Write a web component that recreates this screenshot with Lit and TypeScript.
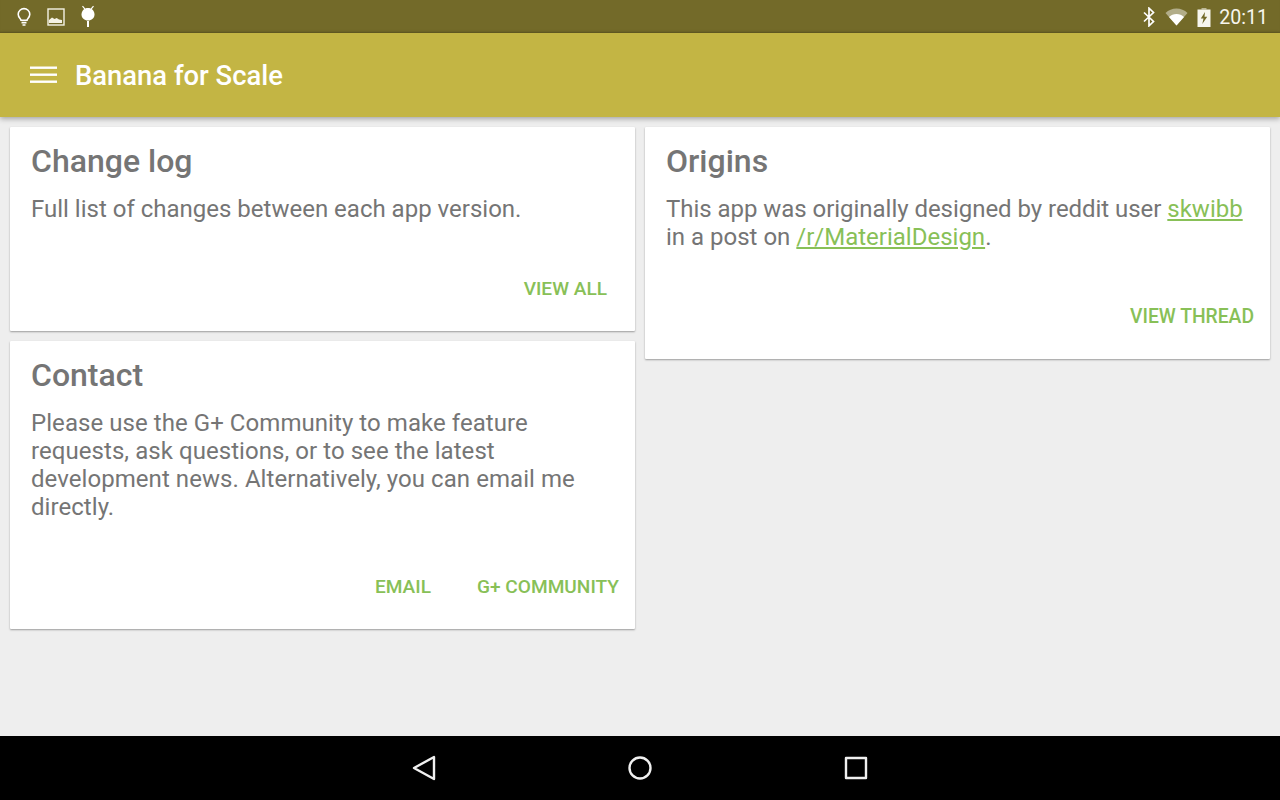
import { LitElement, html, css } from "lit";
import { customElement } from "lit/decorators.js";

@customElement("app-root")
export class AppRoot extends LitElement {
  static styles = css`
    :host { display: block; width: 1280px; height: 800px; font-family: Roboto, "Noto Sans", sans-serif; background: #eeeeee; overflow: hidden; }
    .page { display: flex; flex-direction: column; height: 800px; }
    .status { height: 33px; background: #736a29; display: flex; align-items: center; color: #fff; padding: 0 12px 0 15px; box-sizing: border-box; flex: none; box-shadow: inset 0 -2px 2px -1px rgba(0,0,0,.18); }
    .status svg { display: block; }
    .left { display: flex; align-items: center; gap: 14px; flex: 1; }
    .right { display: flex; align-items: center; gap: 9px; }
    .time { font-size: 19.6px; font-weight: 400; margin-left: -1px; margin-top: 1px; color: #f7f6ee; }
    .toolbar { height: 84px; background: #c3b544; display: flex; align-items: center; flex: none; padding-left: 30px; gap: 18px; box-shadow: 0 2px 5px rgba(0,0,0,.3); position: relative; }
    .toolbar span { color: #fff; font-size: 27.4px; font-weight: 500; padding-top: 2px; }
    .content { flex: 1; display: grid; grid-template-columns: 625px 625px; column-gap: 10px; padding: 10px; box-sizing: border-box; align-items: start; }
    .col { display: flex; flex-direction: column; gap: 10px; }
    .card { background: #fff; border-radius: 1px; box-shadow: 0 1px 2px rgba(0,0,0,.35); padding: 15px 21px 0; display: flex; flex-direction: column; box-sizing: border-box; }
    .c1 { height: 204px; }
    .c2 { height: 288px; }
    .c3 { height: 232px; }
    h2 { margin: 0; font-size: 32px; font-weight: 500; line-height: 38px; color: #757575; }
    p { margin: 15px 0 0; font-size: 24px; line-height: 28px; color: #757575; }
    .c2 p { letter-spacing: 0.06px; }
    .tight { letter-spacing: -0.04px; }
    a { color: #88c057; text-decoration: underline; }
    .actions { margin-top: auto; height: 86px; box-sizing: border-box; padding-top: 1px; display: flex; justify-content: flex-end; align-items: center; gap: 46px; color: #88c057; font-size: 19.1px; font-weight: 500; }
    .c1 .actions { padding-right: 7px; }
    .c2 .actions, .c3 .actions { margin-right: -5px; }
    .c3 .actions { font-size: 19.3px; }
    .nav { height: 64px; background: #000; flex: none; display: flex; align-items: center; justify-content: center; gap: 0; }
    .nav div { width: 216px; display: flex; justify-content: center; }
  `;

  render() {
    return html`<div class="page">
      <div class="status">
        <div class="left">
          <svg width="18" height="20" viewBox="0 0 18 20" fill="none" stroke="#fff" stroke-width="1.6">
            <path d="M6 13.2c0-1.5-2.8-2.6-2.8-6A5.8 5.8 0 0 1 9 1.6a5.8 5.8 0 0 1 5.8 5.6c0 3.4-2.8 4.5-2.8 6z"/>
            <path d="M6.5 15.6h5M7.5 18h3"/>
          </svg>
          <svg width="18" height="18" viewBox="0 0 18 18">
            <rect x="1" y="1" width="16" height="16" fill="none" stroke="#f4f2e4" stroke-width="1.4"/>
            <path d="M2 15v-3l3-2.5 2.500 1.500 2.200-1 2.300 1.500 3 .5v3z" fill="#f4f2e4"/>
          </svg>
          <svg width="18" height="24" viewBox="0 0 18 24" fill="#fff">
            <path d="M3.500 1.200l2.500 3M14.500 1.200l-2.500 3" stroke="#fff" stroke-width="1.2"/>
            <path d="M9 3c3.600 0 6.500 2.600 6.500 6.600 0 3.600-2.900 6-6.500 6s-6.500-2.400-6.500-6C2.500 5.600 5.400 3 9 3z"/>
            <rect x="8" y="16" width="2" height="6" />
          </svg>
        </div>
        <div class="right">
          <svg width="14" height="20" viewBox="0 0 14 20" fill="none" stroke="#fff" stroke-width="1.700">
            <path d="M2 5.500l9.500 9L7 18.800V1.200l4.500 4.300L2 14.500"/>
          </svg>
          <svg width="23" height="18" viewBox="0 0 23 18">
            <path d="M11.500 17.500L.5 5C3.500 2 7.300.5 11.500.5S19.500 2 22.500 5z" fill="#fff" opacity=".45"/>
            <path d="M11.500 17.500L4 9c2-2 4.600-3 7.500-3s5.500 1 7.500 3z" fill="#fff"/>
          </svg>
          <svg width="14" height="20" viewBox="0 0 14 20">
            <path d="M4.500 1h5v1.500h-5z" fill="#f7f6ee" opacity=".55"/>
            <path fill-rule="evenodd" d="M.5 2.500h13V20H.5zM8 5L3.800 11.500h2.700L5.300 17l4.900-7.200H7.500z" fill="#f7f6ee"/>
          </svg>
          <span class="time">20:11</span>
        </div>
      </div>
      <div class="toolbar">
        <svg width="27" height="18" viewBox="0 0 27 18" fill="#fff">
          <rect y="0.500" width="27" height="2.400"/><rect y="7.500" width="27" height="2.400"/><rect y="14.500" width="27" height="2.400"/>
        </svg>
        <span>Banana for Scale</span>
      </div>
      <div class="content">
        <div class="col">
          <div class="card c1">
            <h2>Change log</h2>
            <p>Full list of changes between each app version.</p>
            <div class="actions"><span>VIEW ALL</span></div>
          </div>
          <div class="card c2">
            <h2>Contact</h2>
            <p>Please use the G+ Community to make feature<br>requests, ask questions, or to see the latest<br>development news. Alternatively, you can email me<br>directly.</p>
            <div class="actions"><span>EMAIL</span><span>G+ COMMUNITY</span></div>
          </div>
        </div>
        <div class="col">
          <div class="card c3">
            <h2>Origins</h2>
            <p><span class="tight">This app was originally designed by reddit user </span><a>skwibb</a><br>in a post on <a>/r/MaterialDesign</a>.</p>
            <div class="actions"><span>VIEW THREAD</span></div>
          </div>
        </div>
      </div>
      <div class="nav">
        <div><svg width="26" height="26" viewBox="0 0 26 26" fill="none" stroke="#f0f0f0" stroke-width="2.400" stroke-linejoin="round"><path d="M23 2v22L3 13z"/></svg></div>
        <div><svg width="26" height="26" viewBox="0 0 26 26" fill="none" stroke="#f0f0f0" stroke-width="2.400"><circle cx="13" cy="13" r="10.500"/></svg></div>
        <div><svg width="26" height="26" viewBox="0 0 26 26" fill="none" stroke="#f0f0f0" stroke-width="2.400" stroke-linejoin="round"><rect x="3" y="3" width="20" height="20"/></svg></div>
      </div>
    </div>`;
  }
}
